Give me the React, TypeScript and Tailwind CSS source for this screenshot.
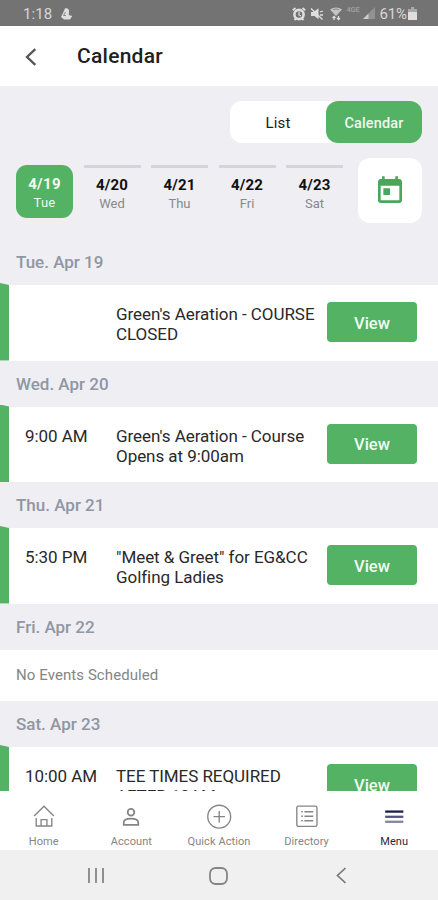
import React from "react";

const GREEN_BAR = "w-[9px] shrink-0 -mt-[2px] bg-[#54b265] [clip-path:polygon(0_0,100%_2px,100%_100%,0_100%)]";

const days = [
  { date: "4/20", name: "Wed" },
  { date: "4/21", name: "Thu" },
  { date: "4/22", name: "Fri" },
  { date: "4/23", name: "Sat" },
];

const sections = [
  { day: "Tue. Apr 19", time: "", lines: ["Green's Aeration - COURSE", "CLOSED"] },
  { day: "Wed. Apr 20", time: "9:00 AM", lines: ["Green's Aeration - Course", "Opens at 9:00am"] },
  { day: "Thu. Apr 21", time: "5:30 PM", lines: ["\"Meet & Greet\" for EG&CC", "Golfing Ladies"] },
  { day: "Fri. Apr 22", time: "", lines: [] },
  { day: "Sat. Apr 23", time: "10:00 AM", lines: ["TEE TIMES REQUIRED", "AFTER 10AM"] },
];

function StatusBar() {
  return (
    <div className="flex h-[25.500px] shrink-0 items-center bg-[#737373] pl-[23px] pr-[21px] pt-[2px] text-[15px] text-[#d6d6d6]">
      <span className="tracking-[0.1px]">1:18</span>
      <svg className="ml-[8px]" width="13" height="14" viewBox="0 0 13 14" fill="#dedede">
        <path d="M5 1.500C7 .5 9.500 2 9 4.500L8.800 8l3.400 1L10 12.500H4L1 10l2-4Z" />
        <path d="M5.500 5 3.500 8.500h2.500" stroke="#8a8a8a" fill="none" />
      </svg>
      <div className="ml-auto flex items-center">
        <svg width="14" height="14" viewBox="0 0 14 14" fill="none" stroke="#dedede">
          <circle cx="7" cy="7.500" r="4.600" strokeWidth="2.600" />
          <path d="M.8 3.200 3.500 1M13.200 3.200 10.500 1M2.500 13l1.500-1.500M11.500 13 10 11.500" strokeWidth="1.800" />
          <path d="M7 4.800V8l2 1" strokeWidth="1.200" />
        </svg>
        <svg className="ml-[4px]" width="14" height="14" viewBox="0 0 14 14" fill="#dedede">
          <path d="M1 5h2.500L8.500 1.200v11L4.500 9H1Z" />
          <path d="m1 1.500 11.500 11M10 5l3-1M10 8h3" stroke="#dedede" strokeWidth="1.300" />
        </svg>
        <svg className="ml-[6px]" width="12" height="14" viewBox="0 0 12 14" fill="none">
          <path d="M0 2.500Q6-1.500 12 2.500L6 9Z" fill="#c4c4c4" />
          <path d="M3 2.700q3-1.500 6 0" stroke="#8a8a8a" />
          <path d="M4 13V9.500M2.500 11 4 9.300 5.500 11M8.500 9v3.500M7 11l1.500 1.700L10 11" stroke="#dedede" strokeWidth="1.200" />
        </svg>
        <span className="ml-[4px] -mt-[9px] w-[15px] text-[7.500px] font-medium leading-none tracking-[-0.100px] text-[#a2a2a2]">4GE</span>
        <svg className="ml-[2px]" width="12" height="13" viewBox="0 0 12 13">
          <path d="M0 12 12 0v12Z" fill="#929292" />
          <path d="M0 12 5.500 6.500V12Z" fill="#cacaca" />
        </svg>
        <span className="ml-[4px] tracking-[-0.100px]">61%</span>
        <svg className="ml-[1px]" width="9" height="13" viewBox="0 0 9 13" fill="#dedede">
          <path d="M3 0h3v2h3v11H0V2h3Z" fill="#a8a8a8" />
          <path d="M0 5h9v8H0Z" />
        </svg>
      </div>
    </div>
  );
}

function Header() {
  return (
    <header className="flex h-[60.500px] shrink-0 items-center bg-white pl-[25px] pt-[2px]">
      <svg width="12" height="18" viewBox="0 0 12 18" fill="none" stroke="#555" strokeWidth="2.300">
        <path d="M10.300 1.200 2 9l8.300 7.800" />
      </svg>
      <h1 className="ml-[40px] text-[21px] font-medium leading-none tracking-[0.250px] text-[#202020]">Calendar</h1>
    </header>
  );
}

function Controls() {
  return (
    <div className="h-[153px] shrink-0 px-4 pt-[15px]">
      <div className="ml-auto flex h-[42px] w-[192px] rounded-[12px] bg-white text-[14.5px] tracking-[0.150px]">
        <div className="flex w-[96px] items-center justify-center pt-[3px] text-[15px] text-[#202020]">List</div>
        <div className="flex w-[96px] items-center justify-center rounded-[12px] bg-[#54b265] pt-[3px] font-medium text-[#eef9ef]">Calendar</div>
      </div>
      <div className="mt-[15px] flex items-start">
        <div className="mt-[7px] flex h-[53px] w-[57px] flex-col items-center rounded-[11px] bg-[#54b265] pt-[10px] text-[#f0faf1]">
          <span className="text-[15px] font-bold leading-[18px] tracking-[0.300px]">4/19</span>
          <span className="text-[13px] leading-[19px] tracking-[0.200px]">Tue</span>
        </div>
        <div className="mt-[7px] ml-[10.500px] flex gap-[10.500px]">
          {days.map((d) => (
            <div key={d.date} className="flex w-[57px] flex-col items-center border-t-[3px] border-[#d3d5da] pt-[7px]">
              <span className="text-[15px] font-bold leading-[20px] tracking-[0.200px] text-[#111]">{d.date}</span>
              <span className="text-[13px] leading-[17px] text-[#898989]">{d.name}</span>
            </div>
          ))}
        </div>
        <div className="ml-auto flex h-[65px] w-[64px] items-center justify-center rounded-[12px] bg-white">
          <svg width="32" height="32" viewBox="0 0 24 24" fill="#49a65a">
            <path d="M19 3h-1V1h-2v2H8V1H6v2H5c-1.110 0-1.990.9-1.990 2L3 19c0 1.100.89 2 2 2h14c1.100 0 2-.9 2-2V5c0-1.100-.9-2-2-2zm0 16H5V8h14v11zM7 10h5v5H7z" />
          </svg>
        </div>
      </div>
    </div>
  );
}

function EventRow({ time, lines }: { time: string; lines: string[] }) {
  return (
    <div className="flex h-[75.500px] shrink-0 bg-white text-[17px] leading-[20px] text-[#292929]">
      <div className={GREEN_BAR} />
      <div className="w-[107px] pl-[16px] pt-[19px] tracking-[-0.050px]">{time}</div>
      <div className="w-[211px] whitespace-nowrap pt-[19px] tracking-[-0.050px]">
        {lines.map((line) => (
          <div key={line}>{line}</div>
        ))}
      </div>
      <div className="mt-[17px] flex h-[40px] w-[90px] items-center justify-center rounded-[4px] bg-[#54b265] pt-[3px] text-[16.500px] font-medium text-[#f0faf1]">
        View
      </div>
    </div>
  );
}

const tabs = [
  {
    label: "Home",
    icon: <path d="m2.500 11 9.500-9.300L21.500 11M4.500 13v7.700h4.700v-6.200h5.600v6.200h4.700V13M9.200 20.700h5.600" />,
  },
  {
    label: "Account",
    icon: (
      <g strokeWidth="1.700">
        <circle cx="12" cy="7.400" r="3.200" />
        <path d="M5 19.500v-2c0-2.600 3-4 7-4s7 1.400 7 4v2Z" />
      </g>
    ),
  },
  {
    label: "Quick Action",
    icon: (
      <>
        <circle cx="12.200" cy="11.700" r="11" />
        <path d="M12.200 6.200v11M6.700 11.700h11" />
      </>
    ),
  },
  {
    label: "Directory",
    icon: (
      <>
        <rect x="2.200" y="1.600" width="19.400" height="19.400" rx="1.500" />
        <path d="M6.500 7h1.500M9.500 7h8.500M6.500 11.300h1.500M9.500 11.300H18M6.500 15.600h1.500M9.500 15.600H18" />
      </>
    ),
  },
  {
    label: "Menu",
    icon: (
      <g strokeWidth="2.200">
        <path d="M3.500 6.800h17.500" stroke="#1e1d49" />
        <path d="M3.500 11.800h17.500" stroke="#55547c" />
        <path d="M3.500 16.600h17.500" stroke="#85849c" />
      </g>
    ),
  },
];

function TabBar() {
  return (
    <nav className="grid h-[59px] shrink-0 grid-cols-5 bg-white pt-[13px]">
      {tabs.map((t) => (
        <div key={t.label} className={"flex flex-col items-center " + (t.label === "Menu" ? "text-[#292747]" : "text-[#858585]")}>
          <svg width="26" height="26" viewBox="-0.500 -0.500 25 25" fill="none" stroke="currentColor" strokeWidth="1.300">
            {t.icon}
          </svg>
          <span className="mt-[5px] whitespace-nowrap text-[11px] leading-[14px] tracking-[0.080px]">{t.label}</span>
        </div>
      ))}
    </nav>
  );
}

function SystemBar() {
  return (
    <div className="flex h-[50.500px] shrink-0 items-center bg-[#f0f0f0] pl-[87px] pt-[2px]">
      <svg width="18" height="17" viewBox="0 0 18 17" stroke="#858585" strokeWidth="1.800">
        <path d="M2 1v15M9 1v15M16 1v15" />
      </svg>
      <svg className="ml-[104px]" width="19" height="18" viewBox="0 0 19 18" fill="none" stroke="#858585" strokeWidth="1.800">
        <rect x="1" y="1" width="17" height="16" rx="5.500" />
      </svg>
      <svg className="ml-[108px]" width="11" height="17" viewBox="0 0 11 17" fill="none" stroke="#777" strokeWidth="1.700">
        <path d="M9.500 1 1.500 8.500l8 7.500" />
      </svg>
    </div>
  );
}

export default function App() {
  return (
    <div className="flex h-[900px] w-[438px] flex-col overflow-hidden bg-[#eeeef3] font-['Roboto',sans-serif]">
      <StatusBar />
      <Header />
      <Controls />
      <main className="flex min-h-0 flex-1 flex-col overflow-hidden">
        {sections.map((s) => (
          <React.Fragment key={s.day}>
            <h2 className="h-[46px] shrink-0 pl-[16px] text-[17px] font-medium leading-[46px] text-[#9096a3]">{s.day}</h2>
            {s.lines.length ? (
              <EventRow time={s.time} lines={s.lines} />
            ) : (
              <div className="h-[51.500px] shrink-0 bg-white pl-[16px] text-[15px] leading-[51px] tracking-[0.080px] text-[#858585]">No Events Scheduled</div>
            )}
          </React.Fragment>
        ))}
      </main>
      <TabBar />
      <SystemBar />
    </div>
  );
}
